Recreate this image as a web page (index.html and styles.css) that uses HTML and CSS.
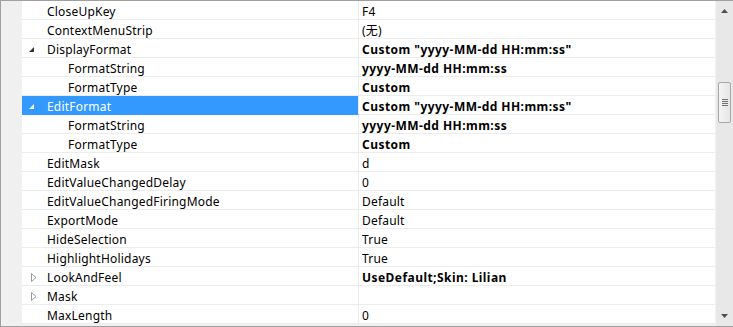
FILE: index.html
```html
<!DOCTYPE html>
<html lang="zh-CN">
<head>
<meta charset="UTF-8">
<title>Property Grid</title>
<link rel="stylesheet" href="styles.css">
</head>
<body>
<div class="grid">
    <div class="rows">
        <div class="row"><span class="gutter"></span><span class="name">CloseUpKey</span><span class="value">F4</span></div>
        <div class="row"><span class="gutter"></span><span class="name">ContextMenuStrip</span><span class="value">(无)</span></div>
        <div class="row"><span class="gutter"><svg class="open" viewBox="0 0 6 6"><path d="M 6 0 L 6 6 L 0 6 Z"/></svg></span><span class="name">DisplayFormat</span><span class="value bold">Custom "yyyy-MM-dd HH:mm:ss"</span></div>
        <div class="row"><span class="gutter"></span><span class="name child">FormatString</span><span class="value bold">yyyy-MM-dd HH:mm:ss</span></div>
        <div class="row"><span class="gutter"></span><span class="name child">FormatType</span><span class="value bold">Custom</span></div>
        <div class="row selected"><span class="gutter"><svg class="open" viewBox="0 0 6 6"><path d="M 6 0 L 6 6 L 0 6 Z"/></svg></span><span class="name">EditFormat</span><span class="value bold">Custom "yyyy-MM-dd HH:mm:ss"</span></div>
        <div class="row"><span class="gutter"></span><span class="name child">FormatString</span><span class="value bold">yyyy-MM-dd HH:mm:ss</span></div>
        <div class="row"><span class="gutter"></span><span class="name child">FormatType</span><span class="value bold">Custom</span></div>
        <div class="row"><span class="gutter"></span><span class="name">EditMask</span><span class="value">d</span></div>
        <div class="row"><span class="gutter"></span><span class="name">EditValueChangedDelay</span><span class="value">0</span></div>
        <div class="row"><span class="gutter"></span><span class="name">EditValueChangedFiringMode</span><span class="value">Default</span></div>
        <div class="row"><span class="gutter"></span><span class="name">ExportMode</span><span class="value">Default</span></div>
        <div class="row"><span class="gutter"></span><span class="name">HideSelection</span><span class="value">True</span></div>
        <div class="row"><span class="gutter"></span><span class="name">HighlightHolidays</span><span class="value">True</span></div>
        <div class="row"><span class="gutter"><svg class="closed" viewBox="0 0 6 9"><path d="M 0.5 0.5 L 5 4.5 L 0.5 8.5 Z"/></svg></span><span class="name">LookAndFeel</span><span class="value bold">UseDefault;Skin: Lilian</span></div>
        <div class="row"><span class="gutter"><svg class="closed" viewBox="0 0 6 9"><path d="M 0.5 0.5 L 5 4.5 L 0.5 8.5 Z"/></svg></span><span class="name">Mask</span><span class="value"></span></div>
        <div class="row"><span class="gutter"></span><span class="name">MaxLength</span><span class="value">0</span></div>
    </div>
    <div class="scrollbar">
        <svg class="arrow" viewBox="0 0 7 4"><path d="M 3.5 0 L 7 4 L 0 4 Z"/></svg>
        <div class="thumb">
            <span class="grip"></span>
            <span class="grip"></span>
            <span class="grip"></span>
            <span class="grip"></span>
        </div>
        <svg class="arrow down" viewBox="0 0 7 4"><path d="M 0 0 L 7 0 L 3.5 4 Z"/></svg>
    </div>
</div>
</body>
</html>
```

FILE: styles.css
```css
body, html {
    margin: 0;
    padding: 0;
    background: #ffffff;
}
.grid {
    width: 733px;
    height: 327px;
    box-sizing: border-box;
    border-top: 1px solid #a0a0a0;
    border-bottom: 1px solid #a0a0a0;
    border-left: 1px solid #a0a0a0;
    display: flex;
    overflow: hidden;
    font-family: "Noto Sans", "Noto Sans CJK SC", sans-serif;
    font-size: 12px;
    letter-spacing: 0.2px;
    color: #000000;
    background: #f0f0f0;
}
.rows {
    width: 715px;
    display: flex;
    flex-direction: column;
}
.row {
    display: grid;
    grid-template-columns: 21px 337px 1fr;
    height: 19px;
    flex-shrink: 0;
}
.gutter {
    background: #f0f0f0;
    display: flex;
    align-items: center;
    justify-content: flex-end;
}
.name, .value {
    box-sizing: border-box;
    height: 19px;
    background: #ffffff;
    border-bottom: 1px solid #ececec;
    padding-top: 3px;
    line-height: 16px;
    white-space: nowrap;
    overflow: hidden;
}
.name {
    border-right: 1px solid #ececec;
    padding-left: 25px;
}
.name.child {
    padding-left: 46px;
}
.value {
    padding-left: 3px;
}
.bold {
    font-weight: bold;
    letter-spacing: 0.45px;
}
.selected .name {
    background: #3399ff;
    color: #ffffff;
    border-bottom-color: #3399ff;
}
.open {
    width: 5px;
    height: 5px;
    margin-right: -12px;
    margin-top: 2px;
    fill: #333333;
    position: relative;
    z-index: 1;
}
.selected .open {
    fill: #ffffff;
}
.closed {
    width: 6px;
    height: 9px;
    margin-right: -15px;
    margin-top: 1px;
    fill: none;
    stroke: #9a9a9a;
    stroke-width: 1px;
    position: relative;
    z-index: 1;
}
.scrollbar {
    width: 17px;
    background: #e8e8e8;
    border-left: 1px solid #f4f4f4;
    display: flex;
    flex-direction: column;
    align-items: center;
}
.arrow {
    width: 7px;
    height: 4px;
    fill: #505050;
    margin-top: 8px;
}
.arrow.down {
    margin-top: auto;
    margin-bottom: 8px;
}
.thumb {
    width: 13px;
    height: 41px;
    margin-top: 69px;
    box-sizing: border-box;
    border: 1px solid #a8a8a8;
    border-radius: 2px;
    background: linear-gradient(to right, #f4f4f4, #e6e6e6);
    display: flex;
    flex-direction: column;
    align-items: center;
    justify-content: center;
    gap: 1px;
}
.grip {
    width: 6px;
    height: 1px;
    background: #707070;
}
```
